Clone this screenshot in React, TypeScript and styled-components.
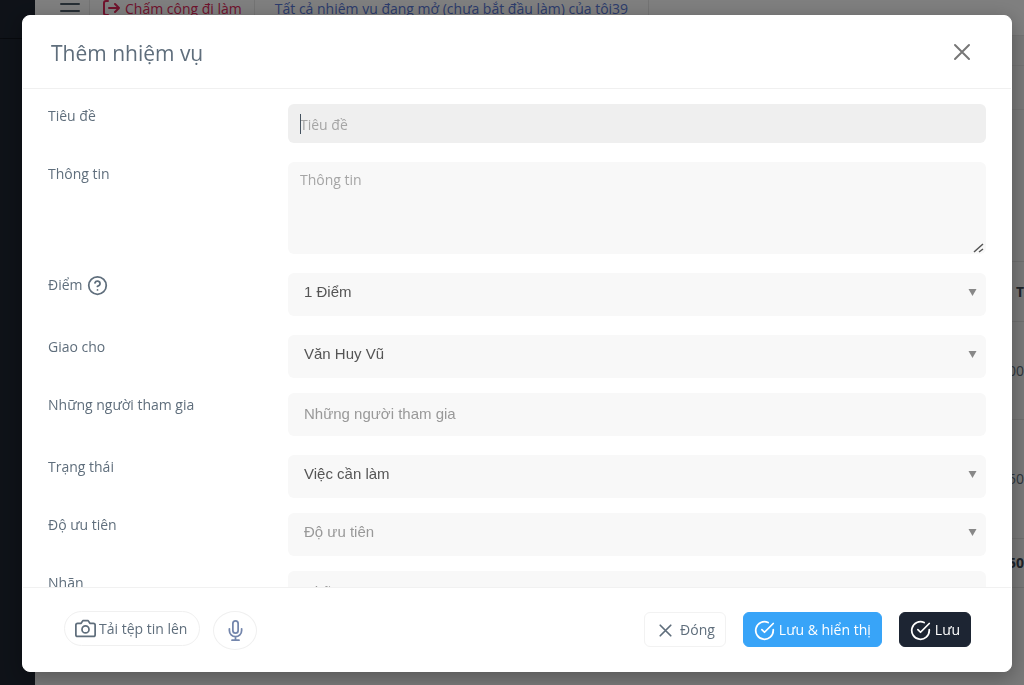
import React from "react";
import styled, { createGlobalStyle } from "styled-components";

const ui = `"Open Sans", "Noto Sans", sans-serif`;
const arial = `"Liberation Sans", Arial, sans-serif`;

const GlobalStyle = createGlobalStyle`
  *, *::before, *::after { box-sizing: border-box; }
  body { margin: 0; font: 14px/20px ${ui}; color: #5f6e7c; overflow: hidden; }
  button, input, textarea, select { font: inherit; margin: 0; }
`;

const Page = styled.div`
  display: flex;
  min-height: 100vh;
  background: #f2f2f2;
`;

const Sidebar = styled.aside`
  flex: 0 0 35px;
  background: #1e2531;
`;

const SidebarBrand = styled.div`
  height: 39px;
  border-bottom: 1px solid #10141c;
`;

const Main = styled.main`
  flex: 1;
  min-width: 0;
`;

const TopBar = styled.header`
  display: flex;
  height: 36px;
  background: #ffffff;
  border-bottom: 1px solid #e9e9e9;
`;

const MenuButton = styled.button`
  display: flex;
  align-items: flex-start;
  justify-content: flex-end;
  width: 55px;
  padding: 2px 8px 0 0;
  border: 0;
  border-right: 1px solid #e9e9e9;
  background: none;
  color: #4e5e6a;
`;

const TopLink = styled.a<{ $tone: string; $pad: number }>`
  display: flex;
  gap: 5px;
  padding: 0 ${(p) => p.$pad}px;
  border-right: 1px solid #e9e9e9;
  color: ${(p) => p.$tone};
  line-height: 18px;
  text-decoration: none;
  white-space: nowrap;
`;

const SubBar = styled.div<{ $height: number }>`
  height: ${(p) => p.$height}px;
  border-bottom: 1px solid #e6e6e6;
`;

const Ledger = styled.table`
  width: 100%;
  margin-top: 151px;
  border-collapse: collapse;
  border-top: 1px solid #dedede;
  th, td { padding: 0; text-align: right; border-bottom: 1px solid #dedede; }
  th { color: #3d4854; }
`;

const LedgerRow = styled.tr<{ $height: number }>`
  height: ${(p) => p.$height}px;
`;

const Backdrop = styled.div`
  position: fixed;
  inset: 0;
  display: flex;
  padding: 15px 12px 13px 22px;
  background: rgba(0, 0, 0, 0.5);
`;

const Modal = styled.section`
  flex: 1;
  min-width: 0;
  display: flex;
  flex-direction: column;
  overflow: hidden;
  border: 1px solid #ffffff;
  border-radius: 8px;
  background: #ffffff;
  box-shadow: 0 5px 20px rgba(0, 0, 0, 0.3);
`;

const ModalHeader = styled.header`
  display: flex;
  align-items: center;
  justify-content: space-between;
  flex: 0 0 73px;
  padding: 0 40px 0 28px;
  border-bottom: 1px solid #f0f0f0;
`;

const Title = styled.h1`
  margin: 0;
  padding-top: 2px;
  font-size: 21px;
  line-height: 30px;
  font-weight: 400;
`;

const CloseButton = styled.button`
  padding: 0;
  border: 0;
  background: none;
  color: #777777;
  svg { display: block; }
`;

const ModalBody = styled.form`
  flex: 1;
  min-height: 0;
  overflow: hidden;
  padding: 15px 25px 0 25px;
`;

const Row = styled.div<{ $gap?: number }>`
  display: grid;
  grid-template-columns: 240px 1fr;
  align-items: start;
  margin-bottom: ${(p) => p.$gap ?? 19}px;
`;

const LabelCell = styled.div`
  display: flex;
  align-items: center;
  gap: 4px;
  height: 24px;
`;

const TitleField = styled.div`
  position: relative;
  &::after {
    content: "";
    position: absolute;
    left: 12px;
    top: 10px;
    width: 1px;
    height: 20px;
    background: #44525f;
  }
`;

const TextInput = styled.input`
  display: block;
  width: 100%;
  height: 39px;
  padding: 2px 12px 0;
  border: 0;
  border-radius: 6px;
  outline: 0;
  background: #efefef;
  &::placeholder { color: #a5a5a5; opacity: 1; }
`;

const AreaField = styled.div`
  position: relative;
  svg {
    position: absolute;
    right: 2px;
    bottom: 1px;
    pointer-events: none;
  }
`;

const TextArea = styled.textarea`
  display: block;
  width: 100%;
  height: 92px;
  padding: 8px 12px;
  border: 0;
  border-radius: 6px;
  outline: 0;
  background: #f8f8f8;
  resize: vertical;
  &::placeholder { color: #a5a5a5; opacity: 1; }
  &::-webkit-resizer { background: transparent; }
`;

const PeopleInput = styled(TextInput)`
  height: 43px;
  padding: 0 16px 2px;
  background: #f8f8f8;
  font-family: ${arial};
  font-size: 15px;
  &::placeholder { color: #999999; }
`;

const SelectBox = styled.div`
  display: grid;
  grid-template-columns: 1fr 18px;
  border-radius: 6px;
  background: #f8f8f8;
  svg { grid-area: 1 / 2; margin-top: 16px; pointer-events: none; }
`;

const Select = styled.select<{ $muted?: boolean }>`
  grid-area: 1 / 1 / 2 / 3;
  width: 100%;
  height: 43px;
  padding: 0 30px 5px 16px;
  border: 0;
  appearance: none;
  background: none;
  color: ${(p) => (p.$muted ? "#999999" : "#555555")};
  font-family: ${arial};
  font-size: 15px;
`;

const ModalFooter = styled.footer`
  display: flex;
  align-items: flex-start;
  flex: 0 0 84px;
  padding: 23px 40px 0 41px;
  border-top: 1px solid #f1f1f1;
`;

const Button = styled.button<{ $fill?: string }>`
  display: flex;
  align-items: center;
  justify-content: center;
  gap: 4px;
  height: 35px;
  margin-top: 1px;
  padding: 1px 10px 0;
  border: 1px solid ${(p) => p.$fill ?? "#f2f2f2"};
  border-radius: 6px;
  background: ${(p) => p.$fill ?? "#ffffff"};
  color: ${(p) => (p.$fill ? "#ffffff" : "#5f6e7c")};
  white-space: nowrap;
`;

const PillButton = styled(Button)`
  gap: 3px;
  margin-top: 0;
  padding: 0 12px 0 10px;
  border-color: #f0f0f0;
  border-radius: 20px;
`;

const RoundButton = styled(PillButton)`
  width: 44px;
  height: 39px;
  margin-left: 13px;
  padding: 0;
  border-radius: 50%;
  color: #7486ac;
`;

const Actions = styled.div`
  display: flex;
  gap: 17px;
  margin-left: auto;
`;

const Icon = ({ children }: { children: React.ReactNode }) => (
  <svg width="21" height="21" viewBox="0 0 24 24" fill="none" stroke="currentColor"
    strokeWidth="2" strokeLinecap="round" strokeLinejoin="round" aria-hidden="true">
    {children}
  </svg>
);

const CheckCircle = () => (
  <Icon>
    <path d="M22 11.1V12a10 10 0 1 1-5.9-9.1" />
    <path d="m22 4-10 10-3-3" />
  </Icon>
);

type SelectRowProps = { id: string; label: string; value: string; gap?: number; muted?: boolean; help?: boolean };

const SelectRow = ({ id, label, value, gap, muted, help }: SelectRowProps) => (
  <Row $gap={gap}>
    <LabelCell>
      <label htmlFor={id}>{label}</label>
      {help && (
        <Icon>
          <circle cx="12" cy="12" r="10" />
          <path d="M9.1 9a3 3 0 0 1 5.8 1c0 2-3 3-3 3M12 17h.01" />
        </Icon>
      )}
    </LabelCell>
    <SelectBox>
      <Select id={id} $muted={muted}>
        <option>{value}</option>
      </Select>
      <svg width="9" height="7" viewBox="0 0 9 7" aria-hidden="true">
        <path d="M.5 0h8l-4 7z" fill="#888888" />
      </svg>
    </SelectBox>
  </Row>
);

export default function App() {
  return (
    <>
      <GlobalStyle />
      <Page>
        <Sidebar>
          <SidebarBrand />
        </Sidebar>
        <Main>
          <TopBar>
            <MenuButton type="button" aria-label="Menu">
              <svg width="22" height="12" viewBox="0 0 22 12" aria-hidden="true">
                <path d="M2 2h18M2 9h18" stroke="currentColor" strokeWidth="2" strokeLinecap="round" />
              </svg>
            </MenuButton>
            <TopLink href="#" $tone="#e0285a" $pad={12}>
              <svg width="18" height="17" viewBox="0 0 18 17" fill="none" stroke="currentColor"
                strokeWidth="2" strokeLinecap="round" strokeLinejoin="round" aria-hidden="true">
                <path d="M6 1H4a2 2 0 0 0-2 2v10a2 2 0 0 0 2 2h2M7 8h10M13 4l4 4-4 4" />
              </svg>
              Chấm công đi làm
            </TopLink>
            <TopLink href="#" $tone="#5878d8" $pad={20}>
              Tất cả nhiệm vụ đang mở (chưa bắt đầu làm) của tôi39
            </TopLink>
          </TopBar>
          <SubBar $height={30} />
          <SubBar $height={44} />
          <Ledger>
            <thead>
              <LedgerRow $height={60}><th>T</th></LedgerRow>
            </thead>
            <tbody>
              <LedgerRow $height={98}><td>00</td></LedgerRow>
              <LedgerRow $height={119}><td>50</td></LedgerRow>
              <LedgerRow $height={49}><th>50</th></LedgerRow>
            </tbody>
          </Ledger>
        </Main>
      </Page>

      <Backdrop>
        <Modal role="dialog" aria-modal="true" aria-labelledby="dialog-title">
          <ModalHeader>
            <Title id="dialog-title">Thêm nhiệm vụ</Title>
            <CloseButton type="button" aria-label="Đóng">
              <svg width="18" height="18" viewBox="0 0 18 18" stroke="currentColor" strokeWidth="2" strokeLinecap="round" aria-hidden="true">
                <path d="m2 2 14 14M16 2 2 16" />
              </svg>
            </CloseButton>
          </ModalHeader>

          <ModalBody id="task-form">
            <Row>
              <LabelCell><label htmlFor="title">Tiêu đề</label></LabelCell>
              <TitleField><TextInput id="title" placeholder="Tiêu đề" /></TitleField>
            </Row>
            <Row>
              <LabelCell><label htmlFor="info">Thông tin</label></LabelCell>
              <AreaField>
                <TextArea id="info" placeholder="Thông tin" />
                <svg width="11" height="11" viewBox="0 0 11 11" stroke="#555555" strokeWidth="1.5" aria-hidden="true">
                  <path d="M1 10l9-8M6 10l4-3" />
                </svg>
              </AreaField>
            </Row>
            <SelectRow id="points" label="Điểm" value="1 Điểm" help />
            <SelectRow id="assignee" label="Giao cho" value="Văn Huy Vũ" gap={15} />
            <Row>
              <LabelCell><label htmlFor="people">Những người tham gia</label></LabelCell>
              <PeopleInput id="people" placeholder="Những người tham gia" />
            </Row>
            <SelectRow id="status" label="Trạng thái" value="Việc cần làm" gap={15} />
            <SelectRow id="priority" label="Độ ưu tiên" value="Độ ưu tiên" gap={15} muted />
            <Row>
              <LabelCell><label htmlFor="tags">Nhãn</label></LabelCell>
              <PeopleInput id="tags" placeholder="Nhãn" />
            </Row>
          </ModalBody>

          <ModalFooter>
            <PillButton type="button">
              <Icon>
                <path d="M23 19a2 2 0 0 1-2 2H3a2 2 0 0 1-2-2V8a2 2 0 0 1 2-2h4l2-3h6l2 3h4a2 2 0 0 1 2 2z" />
                <circle cx="12" cy="13" r="4" />
              </Icon>
              Tải tệp tin lên
            </PillButton>
            <RoundButton type="button" aria-label="Micro">
              <Icon>
                <path d="M12 1a3 3 0 0 0-3 3v8a3 3 0 0 0 6 0V4a3 3 0 0 0-3-3z" />
                <path d="M19 10v2a7 7 0 0 1-14 0v-2M12 19v4M8 23h8" />
              </Icon>
            </RoundButton>
            <Actions>
              <Button type="button"><Icon><path d="M18 6 6 18M6 6l12 12" /></Icon>Đóng</Button>
              <Button type="button" $fill="#38a4f8"><CheckCircle />Lưu &amp; hiển thị</Button>
              <Button type="submit" form="task-form" $fill="#1d2533"><CheckCircle />Lưu</Button>
            </Actions>
          </ModalFooter>
        </Modal>
      </Backdrop>
    </>
  );
}
